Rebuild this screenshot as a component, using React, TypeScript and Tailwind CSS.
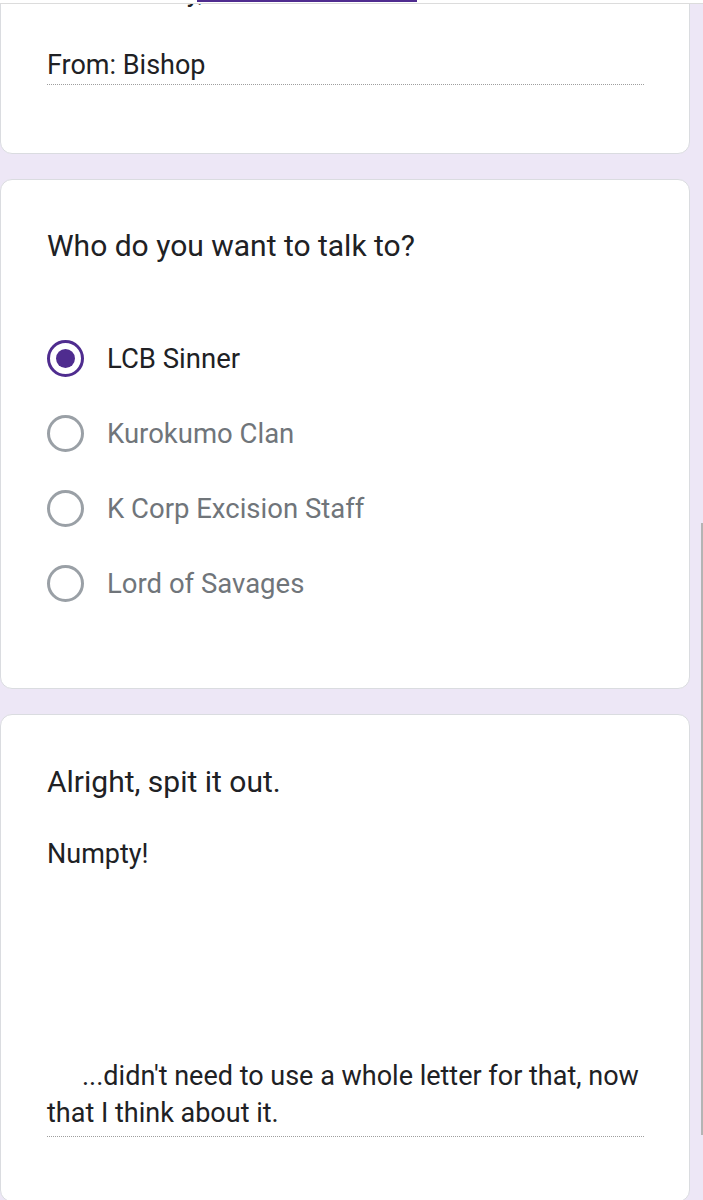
import { useState } from 'react'

const options = ['LCB Sinner', 'Kurokumo Clan', 'K Corp Excision Staff', 'Lord of Savages']

function Radio({ checked }: { checked: boolean }) {
  return (
    <span
      className={
        'flex h-[37px] w-[37px] shrink-0 items-center justify-center rounded-full border-[3.5px] ' +
        (checked ? 'border-[#4f2c8f]' : 'border-[#9aa0a6]')
      }
    >
      {checked && <span className="h-[19px] w-[19px] rounded-full bg-[#4f2c8f]" />}
    </span>
  )
}

export default function App() {
  const [picked, setPicked] = useState(0)

  return (
    <div className="relative h-[1200px] overflow-hidden bg-[#ede7f6] font-['Roboto',sans-serif] text-[#202124]">
      {/* sticky strip over the top */}
      <div className="absolute inset-x-0 top-0 z-10 h-[4px] border-b border-[#dcdcdc] bg-white">
        <div className="ml-[197px] h-[2px] w-[220px] bg-[#4f2c8f]" />
      </div>
      {/* scrollbar thumb */}
      <div className="absolute right-0 top-[523px] h-[612px] w-[2px] bg-[#b4b4b4]" />

      <div className="mr-[13px] flex flex-col gap-[25px]">
        {/* letter card (top cut off) */}
        <div className="-mt-[39px] rounded-b-xl border border-[#dadce0] bg-white pl-[46px] pr-[45px] pb-[68px] pt-[12px]">
          <div className="border-b border-dotted border-[#9e9e9e] text-[27px] leading-[37px]">
            <p className="indent-[44px]">Sincerely,</p>
            <div className="h-[36px]" />
            <p>From: Bishop</p>
          </div>
        </div>

        {/* who do you want to talk to */}
        <div className="rounded-xl border border-[#dadce0] bg-white pl-[46px] pr-[45px] pt-[48px] pb-[67px]">
          <h2 className="text-[30px] leading-[36px]">Who do you want to talk to?</h2>
          <div className="mt-[57px] flex flex-col">
            {options.map((o, i) => (
              <button
                key={o}
                type="button"
                onClick={() => setPicked(i)}
                className="flex h-[75px] items-center gap-[23px] text-left"
              >
                <Radio checked={picked === i} />
                <span className={'text-[27.5px] ' + (picked === i ? 'text-[#202124]' : 'text-[#70757a]')}>{o}</span>
              </button>
            ))}
          </div>
        </div>

        {/* message */}
        <div className="rounded-xl border border-[#dadce0] bg-white pl-[46px] pr-[45px] pt-[49px] pb-[64px]">
          <h2 className="text-[30px] leading-[36px]">Alright, spit it out.</h2>
          <div className="mt-[36px] border-b border-dotted border-[#9e9e9e] pb-[4px] text-[27px] leading-[37px]">
            <p>Numpty!</p>
            <p>&nbsp;</p>
            <p>&nbsp;</p>
            <p>&nbsp;</p>
            <p>&nbsp;</p>
            <p>&nbsp;</p>
            <p className="indent-[35px]">...didn't need to use a whole letter for that, now that I think about it.</p>
          </div>
        </div>
      </div>
    </div>
  )
}
